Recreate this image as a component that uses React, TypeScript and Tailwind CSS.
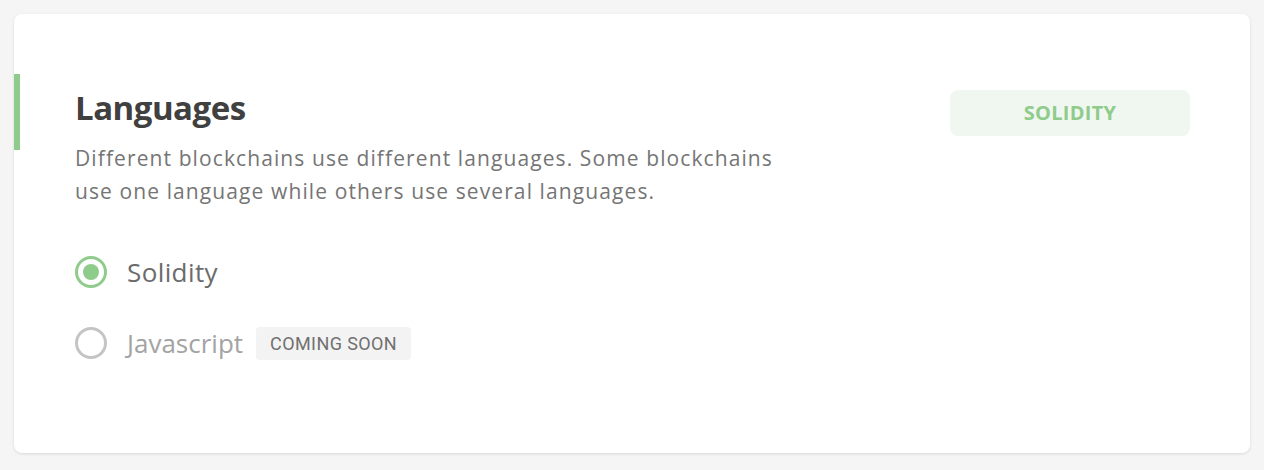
import React, { useState } from 'react';

const languages = [
  { id: 'solidity', label: 'Solidity', disabled: false },
  { id: 'javascript', label: 'Javascript', disabled: true },
];

const App = () => {
  const [selected, setSelected] = useState('solidity');

  return (
    <div className="min-h-[470px] bg-[#f5f5f5] p-[14px] font-['Open_Sans',sans-serif]">
      <div className="bg-white rounded-lg shadow-[0_1px_3px_rgba(0,0,0,0.12)] h-[439px] pt-[60px]">
        <div className="flex justify-between items-start pr-[60px]">
          <div className="border-l-[6px] border-[#8fcb8b] pl-[55px] pt-[12px] h-[76px]">
            <h2 className="text-[33px] leading-[44px] font-bold text-[#404040] tracking-[-0.5px]">Languages</h2>
          </div>
          <div className="mt-[16px] w-[240px] h-[46px] rounded-lg bg-[#f0f7f0] flex items-center justify-center text-[20px] font-bold tracking-[0.3px] text-[#8fcb8b]">
            SOLIDITY
          </div>
        </div>
        <div className="pl-[61px]">
          <p className="-mt-[8px] text-[21px] leading-[33px] tracking-[1.1px] text-[#757575] max-w-[720px]">
            Different blockchains use different languages. Some blockchains use one language while others use several languages.
          </p>
          <div className="mt-[48px] flex flex-col gap-[39px]">
            {languages.map((lang) => {
              const active = selected === lang.id;
              return (
                <label
                  key={lang.id}
                  className="flex items-center h-[32px] cursor-pointer"
                  onClick={() => !lang.disabled && setSelected(lang.id)}
                >
                  <span
                    className={`w-[32px] h-[32px] rounded-full border-[3px] flex items-center justify-center ${
                      active ? 'border-[#8fcb8b]' : 'border-[#c4c4c4]'
                    }`}
                  >
                    {active && <span className="w-[16px] h-[16px] rounded-full bg-[#8fcb8b]" />}
                  </span>
                  <span className={`ml-[20px] text-[26px] ${lang.disabled ? 'text-[#a3a3a3]' : 'text-[#6b6b6b] tracking-[0.4px]'}`}>
                    {lang.label}
                  </span>
                  {lang.disabled && (
                    <span className="ml-[13px] h-[33px] px-[14px] flex items-center rounded bg-[#f3f3f3] font-['Roboto',sans-serif] text-[18px] tracking-[0.4px] text-[#707070]">
                      COMING SOON
                    </span>
                  )}
                </label>
              );
            })}
          </div>
        </div>
      </div>
    </div>
  );
};

export default App;
